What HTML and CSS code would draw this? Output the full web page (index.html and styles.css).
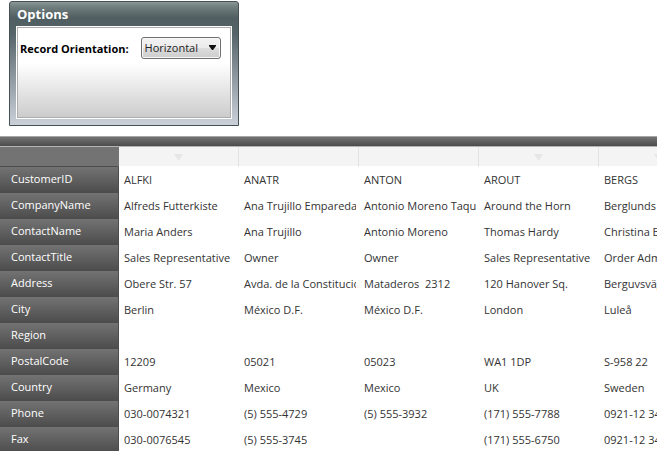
FILE: index.html
```html
<!DOCTYPE html>
<html lang="en">
<head>
<meta charset="utf-8">
<title>Customers</title>
<link rel="stylesheet" href="styles.css">
</head>
<body>
<main class="page">
  <section class="options">
    <h1 class="options-title">Options</h1>
    <div class="options-body">
      <label class="options-label" for="orientation">Record Orientation:</label>
      <span class="picker">
        <select id="orientation" class="picker-select">
          <option>Horizontal</option>
          <option>Vertical</option>
        </select>
        <svg class="picker-arrow" width="7" height="5" viewBox="0 0 7 5" aria-hidden="true"><path d="M0 0h7v1L4 5H3L0 1z"/></svg>
      </span>
    </div>
  </section>
  <div class="grid">
    <div class="grid-band"></div>
    <table class="records">
      <colgroup><col class="col-label"><col class="col-record"><col class="col-record"><col class="col-record"><col class="col-record"><col class="col-record"></colgroup>
      <thead>
        <tr>
          <td class="corner"></td>
          <td><svg class="sort" width="9" height="6" viewBox="0 0 9 6"><path d="M0 0h9L5 6H4z"/></svg></td>
          <td></td>
          <td></td>
          <td><svg class="sort" width="9" height="6" viewBox="0 0 9 6"><path d="M0 0h9L5 6H4z"/></svg></td>
          <td><svg class="sort" width="9" height="6" viewBox="0 0 9 6"><path d="M0 0h9L5 6H4z"/></svg></td>
        </tr>
      </thead>
      <tbody>
        <tr><th scope="row">CustomerID</th><td>ALFKI</td><td>ANATR</td><td>ANTON</td><td>AROUT</td><td>BERGS</td></tr>
        <tr><th scope="row">CompanyName</th><td>Alfreds Futterkiste</td><td>Ana Trujillo Emparedados</td><td>Antonio Moreno Taquería</td><td>Around the Horn</td><td>Berglunds snabbköp</td></tr>
        <tr><th scope="row">ContactName</th><td>Maria Anders</td><td>Ana Trujillo</td><td>Antonio Moreno</td><td>Thomas Hardy</td><td>Christina Berglund</td></tr>
        <tr><th scope="row">ContactTitle</th><td>Sales Representative</td><td>Owner</td><td>Owner</td><td>Sales Representative</td><td>Order Administrator</td></tr>
        <tr><th scope="row">Address</th><td>Obere Str. 57</td><td>Avda. de la Constitución</td><td>Mataderos  2312</td><td>120 Hanover Sq.</td><td>Berguvsvägen  8</td></tr>
        <tr><th scope="row">City</th><td>Berlin</td><td>México D.F.</td><td>México D.F.</td><td>London</td><td>Luleå</td></tr>
        <tr><th scope="row">Region</th><td></td><td></td><td></td><td></td><td></td></tr>
        <tr><th scope="row">PostalCode</th><td>12209</td><td>05021</td><td>05023</td><td>WA1 1DP</td><td>S-958 22</td></tr>
        <tr><th scope="row">Country</th><td>Germany</td><td>Mexico</td><td>Mexico</td><td>UK</td><td>Sweden</td></tr>
        <tr><th scope="row">Phone</th><td>030-0074321</td><td>(5) 555-4729</td><td>(5) 555-3932</td><td>(171) 555-7788</td><td>0921-12 34 65</td></tr>
        <tr><th scope="row">Fax</th><td>030-0076545</td><td>(5) 555-3745</td><td></td><td>(171) 555-6750</td><td>0921-12 34 67</td></tr>
      </tbody>
    </table>
  </div>
</main>
</body>
</html>
```
FILE: styles.css
```css
* {
  box-sizing: border-box;
}

body {
  margin: 0;
  background: #fff;
  color: #333;
  font-family: "Segoe UI", "Open Sans", "Noto Sans", sans-serif;
  font-size: 11px;
  line-height: 16px;
}

.page {
  display: flex;
  flex-direction: column;
  gap: 10px;
  height: 100vh;
  padding-top: 1px;
  overflow: hidden;
}

/* Options panel */
.options {
  flex: none;
  align-self: flex-start;
  width: 230px;
  margin-left: 9px;
  padding: 0 6px 6px;
  border: 1px solid #435056;
  border-radius: 3px 3px 0 0;
  background: linear-gradient(#8b9796 0, #6f7d7d 5px, #505e61 16px, #56656a 32px, #ccd1d9 100%);
}

.options-title {
  margin: 0;
  padding: 0 1px;
  color: #fff;
  font-size: 13px;
  line-height: 24px;
}

.options-body {
  display: flex;
  align-items: flex-start;
  gap: 12px;
  min-height: 93px;
  padding: 10px 3px;
  border: 1px solid #fff;
  outline: 1px solid #adadad;
  outline-offset: -2px;
  background: linear-gradient(#fff 40%, #cbcbcb);
}

.options-label {
  color: #000;
  font-weight: 700;
  line-height: 24px;
  white-space: nowrap;
}

.picker {
  position: relative;
  width: 80px;
}

.picker-select {
  display: block;
  width: 100%;
  height: 22px;
  padding: 0 3px;
  appearance: none;
  border: 1px solid #707070;
  border-radius: 3px;
  background: linear-gradient(#f3f3f3, #ebebeb 50%, #dddddd 50%, #cdcdcd);
  box-shadow: inset 0 0 0 1px #f8f8f8;
  color: #222;
  font: inherit;
}

.picker-arrow {
  position: absolute;
  top: 8px;
  right: 5px;
  fill: #111;
  pointer-events: none;
}

/* Record grid */
.grid {
  flex: 1;
  min-height: 0;
  overflow: hidden;
}

.grid-band {
  height: 11px;
  border-top: 1px solid #a6a6a6;
  border-bottom: 1px solid #b4b4b4;
  background: linear-gradient(#737373, #4c4c4c);
}

.records {
  width: 719px;
  border-collapse: separate;
  border-spacing: 0;
  table-layout: fixed;
}

.col-label {
  width: 119px;
}

.col-record {
  width: 120px;
}

.records td,
.records th {
  height: 26px;
  padding: 0 0 0 5px;
  border-right: 3px solid transparent;
  overflow: hidden;
  text-align: left;
  font-weight: 400;
  white-space: pre;
}

.records thead td {
  height: 20px;
  padding: 0;
  border-right: 1px solid #e2e2e2;
  border-bottom: 1px solid #fff;
  background: #f4f4f4;
}

.records thead .corner {
  border-right-color: #737373;
  border-bottom-color: #4c4c4c;
  background: #737373;
}

.records th {
  padding: 0 3px 2px 11px;
  border-right: 1px solid #4c4c4c;
  background: linear-gradient(#737373, #4c4c4c);
  color: #fff;
}

.sort {
  display: block;
  margin: 0 auto;
  fill: #e6e6e6;
}
```
